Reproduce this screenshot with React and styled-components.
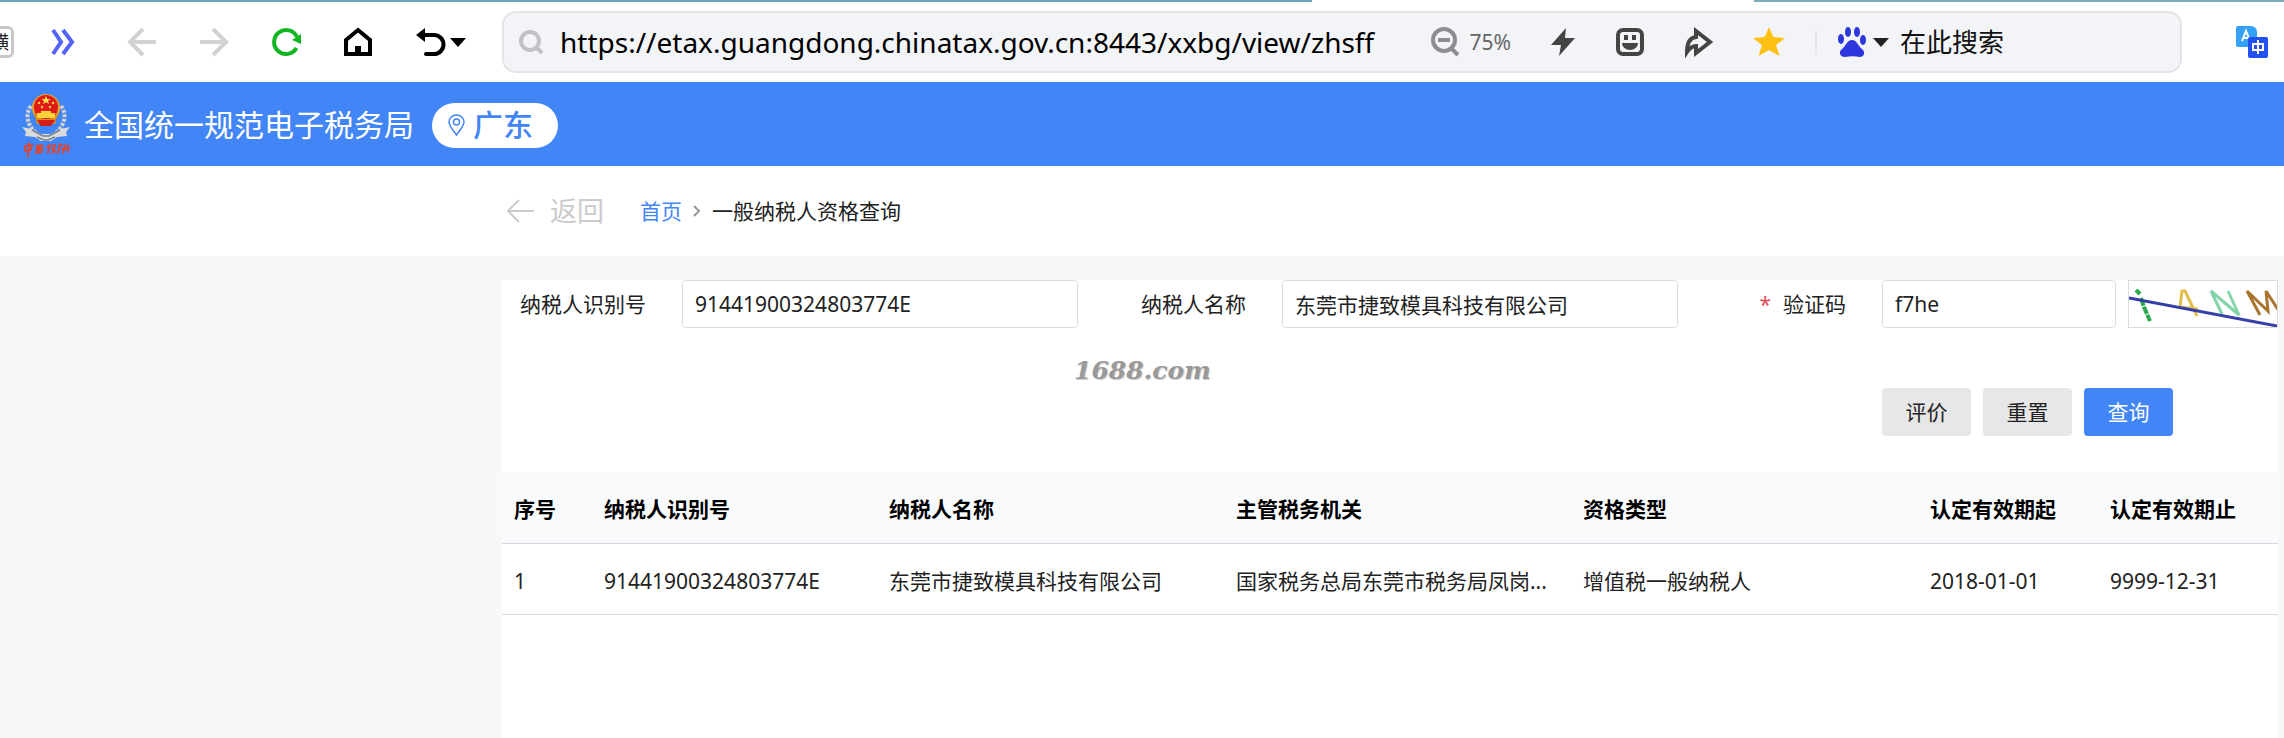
import styled, { createGlobalStyle, css } from 'styled-components';

const Global = createGlobalStyle`
    * { box-sizing: border-box; }
    body {
        margin: 0;
        background: #f6f8fa;
        color: #222;
        font-family: "Noto Sans", "Noto Sans CJK SC", sans-serif;
        font-size: 21px;
        line-height: 30px;
    }
    button, input {
        font: inherit;
        color: inherit;
    }
    svg {
        display: block;
        flex: none;
    }
`;

const Page = styled.div`
    min-height: 100vh;
    overflow: hidden;
`;

/* browser chrome */

const TabStrip = styled.div`
    height: 2px;
    display: grid;
    grid-template-columns: 1312fr 442fr 530fr;
    background: #fff;
`;

const TabEdge = styled.span`
    background: ${(p) => p.$color};
`;

const Toolbar = styled.div`
    height: 80px;
    display: flex;
    align-items: center;
    background: #fff;
`;

const NavGroup = styled.div`
    width: 502px;
    flex: none;
    display: grid;
    grid-template-columns: 50px 76px 72px 72px 72px 72px auto;
    align-items: center;
    justify-items: start;
`;

const IconButton = styled.button`
    display: flex;
    align-items: center;
    flex: none;
    padding: 0;
    border: 0;
    background: none;
    color: ${(p) => p.$color || '#444'};
`;

const SideTool = styled.button`
    width: 14px;
    height: 32px;
    padding: 0 2px 0 0;
    display: flex;
    justify-content: flex-end;
    align-items: center;
    overflow: hidden;
    border: 3px solid #c8c8c8;
    border-left: 0;
    border-radius: 0 6px 6px 0;
    background: #fff;
    font-size: 18px;
    line-height: 24px;
`;

const AddressBar = styled.div`
    flex: 1;
    min-width: 0;
    height: 62px;
    display: flex;
    align-items: center;
    padding-left: 14px;
    border: 2px solid #e4e4e7;
    border-radius: 14px;
    background: #f3f4f7;
`;

const UrlInput = styled.input`
    flex: 1;
    min-width: 0;
    height: 44px;
    margin: 0 44px 0 16px;
    padding: 0;
    border: 0;
    outline: 0;
    background: none;
    color: #000;
    font-size: 28px;
`;

const BarTools = styled.div`
    display: flex;
    align-items: center;
    gap: 39px;
`;

const ZoomLevel = styled.button`
    display: flex;
    align-items: center;
    gap: 10px;
    padding: 0;
    border: 0;
    background: none;
    color: #666;
`;

const Divider = styled.span`
    width: 2px;
    height: 24px;
    margin-left: 30px;
    background: #e6e6e9;
`;

const SearchBox = styled.div`
    width: 363px;
    display: flex;
    align-items: center;
    gap: 6px;
    padding-left: 20px;
`;

const SearchInput = styled.input`
    flex: 1;
    min-width: 0;
    height: 40px;
    margin-left: 5px;
    padding: 0;
    border: 0;
    outline: 0;
    background: none;
    font-size: 26px;
    &::placeholder {
        color: #111;
        opacity: 1;
    }
`;

const Extensions = styled.div`
    width: 102px;
    flex: none;
    display: flex;
    justify-content: flex-end;
    padding-right: 16px;
`;

/* site header */

const Header = styled.header`
    height: 84px;
    display: flex;
    align-items: center;
    padding: 2px 0 0 20px;
    background: #4285f6;
    color: #fff;
`;

const Brand = styled.h1`
    margin: 0 18px 0 12px;
    font-size: 30px;
    font-weight: 400;
    line-height: 44px;
`;

const Region = styled.button`
    height: 45px;
    display: flex;
    align-items: center;
    gap: 8px;
    padding: 0 25px 0 16px;
    border: 0;
    border-radius: 23px;
    background: #fff;
    color: #4285f6;
    font-size: 30px;
    font-weight: 500;
    line-height: 44px;
`;

const Crumbs = styled.nav`
    height: 90px;
    display: flex;
    align-items: center;
    padding-left: 506px;
    background: #fff;
`;

const Back = styled.button`
    display: flex;
    align-items: center;
    gap: 14px;
    margin-right: 36px;
    padding: 0;
    border: 0;
    background: none;
    color: #ccc;
    font-size: 27px;
`;

const HomeLink = styled.a`
    margin-right: 10px;
    color: #4285f6;
    text-decoration: none;
`;

const Current = styled.span`
    margin-left: 10px;
`;

/* query panel */

const Panel = styled.main`
    margin: 24px 6px 0 502px;
    min-height: 458px;
    background: #fff;
`;

const Form = styled.form`
    position: relative;
    height: 192px;
`;

const Fields = styled.div`
    display: grid;
    grid-template-columns: minmax(0, 600fr) minmax(0, 600fr) minmax(0, 576fr);
`;

const Field = styled.div`
    display: flex;
    align-items: center;
`;

const Label = styled.label`
    width: 180px;
    flex: none;
    padding-right: 36px;
    text-align: right;
    ${(p) => p.$required && css`
        &::before {
            content: "*";
            margin-right: 12px;
            color: #e34d59;
        }
    `}
`;

const TextInput = styled.input`
    flex: 1;
    min-width: 0;
    height: 48px;
    margin-right: ${(p) => p.$gap || '24px'};
    padding: 0 12px;
    border: 1px solid #dcdcdc;
    border-radius: 4px;
    outline: 0;
    background: #fff;
`;

const Captcha = styled.button`
    width: 150px;
    height: 48px;
    flex: none;
    padding: 0;
    overflow: hidden;
    border: 1px solid #dcdcdc;
    background: #fff;
`;

const Actions = styled.div`
    display: flex;
    justify-content: flex-end;
    gap: 12px;
    padding: 60px 105px 0 0;
`;

const Button = styled.button`
    width: 89px;
    height: 48px;
    padding: 0;
    border: 0;
    border-radius: 4px;
    background: ${(p) => (p.$primary ? '#4285f6' : '#e7e7e7')};
    color: ${(p) => (p.$primary ? '#fff' : '#222')};
`;

const Watermark = styled.span`
    position: absolute;
    top: 76px;
    left: 572px;
    color: #999;
    font: italic bold 25px/30px "DejaVu Serif", serif;
    text-shadow: 1px 1px 1px #ccc;
`;

const Table = styled.table`
    width: 100%;
    table-layout: fixed;
    border-collapse: collapse;
`;

const cell = css`
    height: 71px;
    padding: 4px 12px 0;
    border-bottom: 1px solid #d6d9de;
    text-align: left;
    white-space: nowrap;
    overflow: hidden;
    text-overflow: ellipsis;
`;

const Th = styled.th`
    ${cell}
    background: #f9fafc;
    color: #000;
    font-weight: 700;
`;

const Td = styled.td`
    ${cell}
`;

const Caret = () => (
    <svg width="16" height="9" viewBox="0 0 16 9">
        <path d="M0 0h16L8 9z" fill="currentColor" />
    </svg>
);

const Emblem = () => (
    <svg width="52" height="66" viewBox="0 0 52 66">
        <g fill="none" stroke="#d4d2ca" strokeWidth="4" strokeDasharray="3 1.500">
            <path d="M11 14C4 23 8 36 19 43" />
            <path d="M41 14C48 23 44 36 33 43" />
        </g>
        <path d="M2 35l10 2 9 5h10l9-5 10-2-4 5 1 4-10 1-6 4H21l-6-4-10-1 1-4z" fill="#d9dbdc" />
        <path d="M12 38l11 6h6l11-6M17 45l7 3h4l7-3" fill="none" stroke="#75818a" strokeWidth="1.500" />
        <circle cx="26" cy="16" r="14" fill="#e5a12a" />
        <path d="M14 20h24l-3 12H17z" fill="#d98a19" />
        <circle cx="26" cy="15" r="12" fill="#e01b17" />
        <path d="M17 28h18l-4 6H21z" fill="#d51e16" />
        <path d="M26 4l1.300 3h3.200l-2.500 2 1 3-3-1.800-3 1.800 1-3-2.500-2h3.200z" fill="#ffe14a" />
        <g fill="#ffd23c">
            <circle cx="19" cy="11" r="1.200" />
            <circle cx="33" cy="11" r="1.200" />
            <circle cx="22" cy="15" r="1.200" />
            <circle cx="30" cy="15" r="1.200" />
            <path d="M21 19h10v2h4v5H17v-5h4z" />
        </g>
        <g fill="none" stroke="#e2452c" strokeWidth="1.800" strokeLinecap="round">
            <path d="M5 54l7-1-1 5-6 1zM9 51l-1 14" />
            <path d="M17 54l5-1 0 7-6 1 1-7M18 57l3-.500M19 54v6" />
            <path d="M27 55l4-1M29 53l-1 8M32 54l3-1-1 4-2 4M32 57l4 3" />
            <path d="M39 54l3-1M40 52l-2 9M42 57l7-1M45 53l-2 8M48 53v7" />
        </g>
    </svg>
);

const CaptchaArt = () => (
    <svg width="148" height="46" viewBox="0 0 148 46" fill="none" strokeWidth="3">
        <path d="M7 9l4 4M12 17l3 9 3 7 3 7" stroke="#2aaa4c" strokeWidth="4" strokeDasharray="8 1" />
        <path d="M51 26l2-16h3l12 25M51 26l18 2" stroke="#e0bd4e" />
        <path d="M93 33L82 10l28 24-11-24" stroke="#83d5a9" />
        <path d="M131 34l-13-24 21 20-2-20 13 20" stroke="#aa742f" />
        <path d="M0 17l148 28" stroke="#3440a8" />
    </svg>
);

const columns = [
    { title: '序号', width: 90 },
    { title: '纳税人识别号', width: 285 },
    { title: '纳税人名称', width: 347 },
    { title: '主管税务机关', width: 347 },
    { title: '资格类型', width: 347 },
    { title: '认定有效期起', width: 180 },
    { title: '认定有效期止', width: 180 },
];

const rows = [
    ['1', '91441900324803774E', '东莞市捷致模具科技有限公司', '国家税务总局东莞市税务局凤岗...', '增值税一般纳税人', '2018-01-01', '9999-12-31'],
];

const total = columns.reduce((sum, c) => sum + c.width, 0);

const App = () => {
    return (
        <Page>
            <Global />
            <TabStrip>
                <TabEdge $color="#6c9fbc" />
                <TabEdge $color="#fff" />
                <TabEdge $color="#7aa9b8" />
            </TabStrip>
            <Toolbar>
                <NavGroup>
                    <SideTool aria-label="横">横</SideTool>
                    <IconButton $color="#5563fa" aria-label="更多">
                        <svg width="28" height="28" viewBox="0 0 28 28" fill="none" stroke="currentColor" strokeWidth="4">
                            <path d="M3 2l8 12-8 12M13 2l9 12-9 12" />
                        </svg>
                    </IconButton>
                    <IconButton $color="#d2d2d2" aria-label="后退">
                        <svg width="32" height="32" viewBox="0 0 32 32" fill="none" stroke="currentColor" strokeWidth="4">
                            <path d="M17 3L4 16l13 13M4 16h26" />
                        </svg>
                    </IconButton>
                    <IconButton $color="#d2d2d2" aria-label="前进">
                        <svg width="32" height="32" viewBox="0 0 32 32" fill="none" stroke="currentColor" strokeWidth="4">
                            <path d="M15 3l13 13-13 13M28 16H2" />
                        </svg>
                    </IconButton>
                    <IconButton $color="#12b522" aria-label="刷新">
                        <svg width="32" height="32" viewBox="0 0 32 32" fill="none" stroke="currentColor" strokeWidth="4">
                            <path d="M26.500 22A12 12 0 1 1 27 11" />
                            <path d="M31 8v10l-9-4z" fill="currentColor" stroke="none" />
                        </svg>
                    </IconButton>
                    <IconButton $color="#000" aria-label="主页">
                        <svg width="32" height="32" viewBox="0 0 32 32" fill="none" stroke="currentColor" strokeWidth="4">
                            <path d="M4 14L16 4l12 10v14H4z" />
                            <path d="M16 28v-8" strokeWidth="6" />
                        </svg>
                    </IconButton>
                    <IconButton $color="#000" aria-label="撤销">
                        <svg width="36" height="32" viewBox="0 0 36 32" fill="none" stroke="currentColor" strokeWidth="4">
                            <path d="M9 9h11a9 9 0 0 1 0 19h-8" strokeLinecap="round" />
                            <path d="M2 9l9-7v14z" fill="currentColor" stroke="none" />
                        </svg>
                        <Caret />
                    </IconButton>
                </NavGroup>
                <AddressBar>
                    <svg width="26" height="26" viewBox="0 0 26 26" fill="none" stroke="#c2c2c4" strokeWidth="4">
                        <circle cx="12" cy="12" r="9" />
                        <path d="M18 18l6 6" />
                    </svg>
                    <UrlInput aria-label="地址" defaultValue="https://etax.guangdong.chinatax.gov.cn:8443/xxbg/view/zhsff" />
                    <BarTools>
                        <ZoomLevel>
                            <svg width="30" height="30" viewBox="0 0 30 30" fill="none" stroke="#8e8e90" strokeWidth="4">
                                <circle cx="14" cy="13" r="11" />
                                <path d="M8 13h12M21 21l7 7" />
                            </svg>
                            75%
                        </ZoomLevel>
                        <IconButton aria-label="加速">
                            <svg width="26" height="30" viewBox="0 0 26 30" fill="currentColor">
                                <path d="M16 1L1 18h10L9 29l16-18H15z" />
                            </svg>
                        </IconButton>
                        <IconButton aria-label="表情">
                            <svg width="30" height="30" viewBox="0 0 30 30" fill="none" stroke="currentColor" strokeWidth="4">
                                <rect x="3" y="3" width="24" height="24" rx="5" />
                                <path d="M11 8v5M19 8v5" />
                                <path d="M7 16h16a8 7 0 0 1-16 0z" fill="currentColor" stroke="none" />
                            </svg>
                        </IconButton>
                        <IconButton aria-label="分享">
                            <svg width="30" height="34" viewBox="0 0 30 34" fill="none" stroke="currentColor" strokeWidth="4">
                                <path d="M3 27q0-14 9-15V6l14 11-14 11v-7q-5 0-9 6z" />
                            </svg>
                        </IconButton>
                        <IconButton $color="#fdbf10" aria-label="收藏">
                            <svg width="32" height="32" viewBox="0 0 32 32" fill="currentColor">
                                <path d="M16 1l4.300 10L32 12l-9 7 3.500 11L16 24 5.500 30 9 19l-9-7 11.700-1z" />
                            </svg>
                        </IconButton>
                    </BarTools>
                    <Divider />
                    <SearchBox>
                        <svg width="30" height="32" viewBox="0 0 30 32" fill="#2b36dc">
                            <ellipse cx="4" cy="13" rx="3" ry="5" />
                            <ellipse cx="11" cy="6" rx="3" ry="5" />
                            <ellipse cx="20" cy="6" rx="3" ry="5" />
                            <ellipse cx="26" cy="14" rx="3" ry="5" />
                            <path d="M15 14c5 0 6 6 10 9s2 8-2 8c-5-1-10-1-15 0-5 0-7-5-3-8s5-9 10-9z" />
                        </svg>
                        <Caret />
                        <SearchInput aria-label="搜索" placeholder="在此搜索" />
                    </SearchBox>
                </AddressBar>
                <Extensions>
                    <IconButton aria-label="翻译">
                        <svg width="32" height="32" viewBox="0 0 32 32" fill="none" stroke="#fff" strokeWidth="2">
                            <path d="M2 0h13a6 6 0 0 1 6 6v15H2a2 2 0 0 1-2-2V2a2 2 0 0 1 2-2z" fill="#35a0f8" stroke="none" />
                            <path d="M6 15l4-10 4 10M8 12h5" />
                            <rect x="12" y="11" width="20" height="21" rx="2" fill="#2151ee" stroke="none" />
                            <path d="M17 18h10v6H17zM22 14v14" />
                        </svg>
                    </IconButton>
                </Extensions>
            </Toolbar>

            <Header>
                <Emblem />
                <Brand>全国统一规范电子税务局</Brand>
                <Region>
                    <svg width="17" height="22" viewBox="0 0 17 22" fill="none" stroke="currentColor" strokeWidth="1.500">
                        <path d="M8.500 21C5 16 1 12 1 8a7.500 7 0 0 1 15 0c0 4-4 8-7.500 13z" />
                        <circle cx="8.500" cy="8" r="3" />
                    </svg>
                    广东
                </Region>
            </Header>

            <Crumbs>
                <Back>
                    <svg width="30" height="24" viewBox="0 0 30 24" fill="none" stroke="currentColor" strokeWidth="2">
                        <path d="M13 1L2 12l11 11M2 12h26" />
                    </svg>
                    返回
                </Back>
                <HomeLink href="#home">首页</HomeLink>
                <svg width="10" height="12" viewBox="0 0 10 12" fill="none" stroke="#999" strokeWidth="2">
                    <path d="M2 1l5 5-5 5" />
                </svg>
                <Current>一般纳税人资格查询</Current>
            </Crumbs>

            <Panel>
                <Form onSubmit={(e) => e.preventDefault()}>
                    <Fields>
                        <Field>
                            <Label htmlFor="taxNo">纳税人识别号</Label>
                            <TextInput id="taxNo" defaultValue="91441900324803774E" />
                        </Field>
                        <Field>
                            <Label htmlFor="taxName">纳税人名称</Label>
                            <TextInput id="taxName" defaultValue="东莞市捷致模具科技有限公司" />
                        </Field>
                        <Field>
                            <Label htmlFor="code" $required>验证码</Label>
                            <TextInput id="code" $gap="12px" defaultValue="f7he" />
                            <Captcha type="button" aria-label="刷新验证码">
                                <CaptchaArt />
                            </Captcha>
                        </Field>
                    </Fields>
                    <Actions>
                        <Button type="button">评价</Button>
                        <Button type="reset">重置</Button>
                        <Button type="submit" $primary>查询</Button>
                    </Actions>
                    <Watermark>1688.com</Watermark>
                </Form>
                <Table>
                    <colgroup>
                        {columns.map((c) => (
                            <col key={c.title} style={{ width: `${(c.width / total) * 100}%` }} />
                        ))}
                    </colgroup>
                    <thead>
                        <tr>
                            {columns.map((c) => <Th key={c.title}>{c.title}</Th>)}
                        </tr>
                    </thead>
                    <tbody>
                        {rows.map((row) => (
                            <tr key={row[0]}>
                                {row.map((text, i) => <Td key={columns[i].title}>{text}</Td>)}
                            </tr>
                        ))}
                    </tbody>
                </Table>
            </Panel>
        </Page>
    );
};

export default App;
